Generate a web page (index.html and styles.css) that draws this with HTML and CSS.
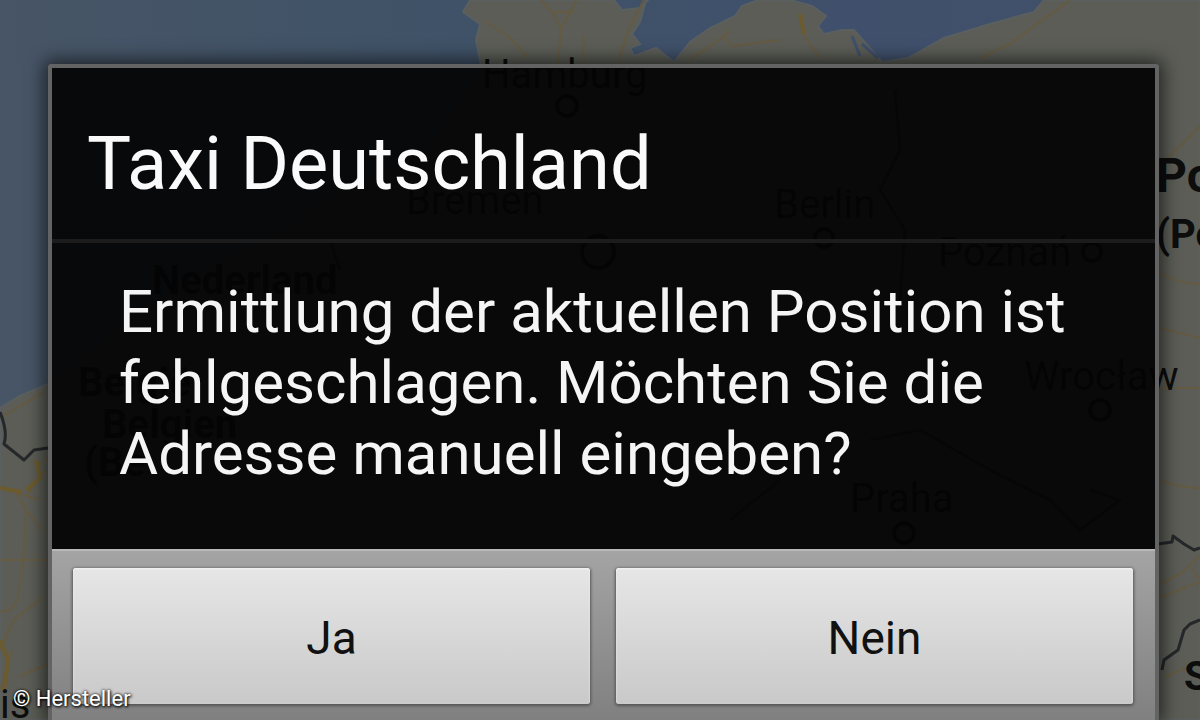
FILE: index.html
```html
<!DOCTYPE html>
<html lang="de">
<head>
    <meta charset="UTF-8">
    <meta name="viewport" content="width=device-width, initial-scale=1.0">
    <title>Taxi Deutschland</title>
    <link rel="stylesheet" href="styles.css">
</head>
<body>
    <div class="screen">
        <svg class="map" viewBox="0 0 1200 720" preserveAspectRatio="xMidYMid slice" aria-hidden="true">
            <defs>
                <linearGradient id="sea" x1="0" x2="1" y1="0" y2="0">
                    <stop offset="0" stop-color="#475566"/>
                    <stop offset="0.4" stop-color="#3f5267"/>
                    <stop offset="0.7" stop-color="#40506c"/>
                    <stop offset="1" stop-color="#41506a"/>
                </linearGradient>
            </defs>
            <rect width="1200" height="720" fill="url(#sea)"/>

            <!-- Land -->
            <g class="land">
                <path d="M0 408 L20 396 L48 384 L170 290 L330 200 L430 150 L482 70 L476 40 L480 24 L463 12 L470 0 H614 L622 10 L640 8 L648 0 H646 L640 22 L632 34 L640 44 L630 48 L634 56 L656 48 L674 62 L690 42 L710 28 L735 16 L742 6 L758 0 H790 L812 6 L826 16 L818 26 L824 34 L842 30 L854 30 L868 46 L882 62 L908 58 L944 38 L990 24 L1034 12 L1044 0 H1200 V720 H0 Z"/>
            </g>
            <path class="lagoon" d="M852 36 L860 56 M862 44 L878 58"/>

            <!-- Roads -->
            <g class="road">
                <path d="M541 0 L552 12 L561 28 L574 6 L576 0 M552 12 H574 M561 28 L558 64 M583 34 L584 64"/>
                <path d="M486 22 L508 36 L528 58 M644 0 L630 26 L622 50 L618 64"/>
                <path d="M690 60 L724 36 L732 46 L780 40 M724 36 L730 30 M800 14 L804 36 L820 58"/>
                <path d="M1070 0 L1040 22 L1010 44 L980 58 M1200 126 L1160 166"/>
                <path d="M0 418 L44 392 M36 468 L48 458 M0 488 L20 494 L40 500 M14 490 L26 510 L24 550 L18 600 L10 610 L0 612 M28 494 L46 470 M26 510 L42 530 M0 560 H48 M0 650 L14 620 L42 598 M0 690 L12 650 M20 676 L48 664"/>
                <path d="M1158 272 Q1178 284 1200 284 M1160 328 L1200 338 M1160 388 H1200 M1160 480 Q1180 488 1200 488"/>
                <path d="M1160 584 L1180 574 L1200 556 M1160 598 L1184 588 L1200 582 M1192 568 L1200 580 M1164 678 L1184 668"/>
            </g>
            <g class="motorway">
                <path d="M36 460 L40 478 L26 490 M0 488 L22 492 M0 640 L8 660 L4 690 M800 14 L804 34"/>
            </g>

            <!-- Borders -->
            <g class="border">
                <path d="M0 412 Q8 432 4 444 L14 452 L24 460 L34 450 L48 448 M1158 544 L1172 542 L1173 536 L1184 544 L1194 550 L1200 548 M1162 670 L1164 660 L1178 650 L1184 630 L1190 624 L1200 620"/>
                <path d="M895 90 L900 150 L880 190 L905 230 L900 300 M330 240 L340 270 M870 440 L920 430 L990 470 L1050 500 L1080 530 L1120 500 L1090 490 M730 520 L780 480"/>
            </g>

            <!-- Places -->
            <g class="place">
                <text x="482" y="88">Hamburg</text>
                <text x="406" y="214">Bremen</text>
                <text x="774" y="218">Berlin</text>
                <text x="938" y="266">Poznań</text>
                <text x="1024" y="390">Wrocław</text>
                <text x="850" y="512">Praha</text>
                <text x="0" y="718">is</text>
                <circle cx="567" cy="106" r="10"/>
                <circle cx="824" cy="238" r="9"/>
                <circle cx="1092" cy="252" r="9"/>
                <circle cx="1100" cy="410" r="10"/>
                <circle cx="904" cy="533" r="10"/>
                <circle cx="598" cy="252" r="16"/>
            </g>
            <g class="country">
                <text x="152" y="294">Nederland</text>
                <text x="78" y="396">België</text>
                <text x="102" y="438">Belgien</text>
                <text x="84" y="476">(Be</text>
                <text x="1156" y="248">(Polen)</text>
                <text x="1184" y="690">Slovensko</text>
                <text class="country-large" x="1156" y="192">Polska</text>
            </g>
        </svg>

        <main class="dialog" role="alertdialog" aria-labelledby="dialogTitle" aria-describedby="dialogMessage">
            <h1 class="dialog-title" id="dialogTitle">Taxi Deutschland</h1>
            <p class="dialog-message" id="dialogMessage">Ermittlung der aktuellen Position ist fehlgeschlagen. Möchten Sie die Adresse manuell eingeben?</p>
            <div class="dialog-buttons">
                <button class="dialog-button" type="button">Ja</button>
                <button class="dialog-button" type="button">Nein</button>
            </div>
        </main>

        <div class="credit">© Hersteller</div>
    </div>
</body>
</html>
```

FILE: styles.css
```css
* {
    margin: 0;
    padding: 0;
    box-sizing: border-box;
}

body {
    font-family: Roboto, "Liberation Sans", sans-serif;
    background: #5b5d56;
}

.screen {
    position: relative;
    display: flex;
    height: 100vh;
    padding: 64px 41px 0 48px;
    overflow: hidden;
}

/* Map behind the dialog */
.map {
    position: absolute;
    inset: 0;
    width: 100%;
    height: 100%;
}

.land {
    fill: #5b5d56;
    stroke: #5a5f60;
    stroke-width: 2;
}

.lagoon {
    fill: none;
    stroke: #40506a;
    stroke-width: 3;
}

.road {
    fill: none;
    stroke: #655a42;
    stroke-width: 2;
}

.motorway {
    fill: none;
    stroke: #6b5b2e;
    stroke-width: 4;
}

.border {
    fill: none;
    stroke: #25272a;
    stroke-width: 3;
    stroke-linejoin: round;
}

.place,
.country {
    fill: #0c0d0c;
    font-size: 40px;
}

.place circle {
    fill: none;
    stroke: #0c0d0c;
    stroke-width: 4;
}

.country {
    font-weight: 700;
}

.country-large {
    font-size: 48px;
}

/* Dialog */
.dialog {
    position: relative;
    flex: 1;
    display: flex;
    flex-direction: column;
    border: 4px solid #636363;
    border-bottom: none;
    border-radius: 4px 4px 0 0;
    box-shadow: 0 0 18px 4px rgba(0, 0, 0, 0.6);
}

.dialog-title {
    padding: 54px 35px 33px;
    border-bottom: 4px solid #1c1c1c;
    background: rgba(4, 4, 4, 0.94);
    color: #fafafa;
    font-size: 74px;
    font-weight: 400;
    line-height: 84px;
}

.dialog-message {
    padding: 33px 67px 60px;
    background: rgba(4, 4, 4, 0.94);
    color: #f5f5f5;
    font-size: 60px;
    line-height: 71px;
}

.dialog-buttons {
    flex: 1;
    display: flex;
    align-items: flex-start;
    gap: 26px;
    padding: 17px 22px 0 21px;
    border-top: 2px solid #b8b8b8;
    background: linear-gradient(#a4a4a4, #808080);
}

.dialog-button {
    flex: 1;
    padding: 42px 16px 38px;
    border: none;
    border-radius: 3px;
    background: linear-gradient(#e6e6e6, #c9c9c9);
    box-shadow: 0 1px 3px 1px #555, inset 0 1px 2px #f4f4f4;
    color: #111;
    font-family: inherit;
    font-size: 46px;
    line-height: 56px;
    cursor: pointer;
}

.dialog-button:active {
    background: linear-gradient(#c9c9c9, #b4b4b4);
}

.credit {
    position: absolute;
    left: 13px;
    bottom: 7px;
    color: #fff;
    font-size: 22px;
    line-height: 28px;
    text-shadow: 1px 1px 3px #000, 0 0 3px #000;
}
```
